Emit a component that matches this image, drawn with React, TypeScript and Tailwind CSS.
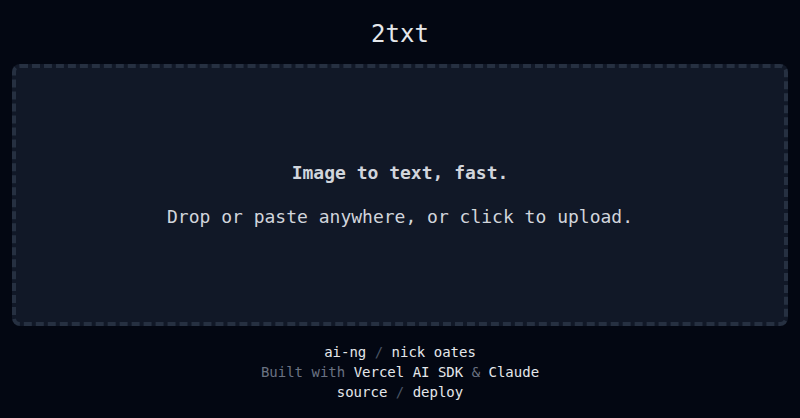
import React from "react";

export default function App() {
  return (
    <div
      className="h-screen flex flex-col bg-[#030712] text-gray-300"
      style={{ fontFamily: '"DejaVu Sans Mono", "Liberation Mono", monospace' }}
    >
      {/* HEADER */}
      <header className="pt-[18px] pb-[14px] text-center">
        <h1 className="text-2xl text-gray-200">2txt</h1>
      </header>

      {/* DROP ZONE */}
      <div className="flex-1 px-3">
        <div className="h-full rounded-lg border-4 border-dashed border-[#263041] bg-[#111827] flex flex-col items-center justify-center gap-4 text-lg">
          <p className="font-bold text-gray-300">Image to text, fast.</p>
          <p className="text-gray-300">Drop or paste anywhere, or click to upload.</p>
        </div>
      </div>

      {/* FOOTER */}
      <footer className="py-4 text-center text-sm leading-5 text-gray-500">
        <p>
          <a className="text-gray-200">ai-ng</a>
          <span className="text-gray-600"> / </span>
          <a className="text-gray-200">nick oates</a>
        </p>
        <p>
          Built with <a className="text-gray-200">Vercel AI SDK</a> &amp;{" "}
          <a className="text-gray-200">Claude</a>
        </p>
        <p>
          <a className="text-gray-200">source</a>
          <span className="text-gray-600"> / </span>
          <a className="text-gray-200">deploy</a>
        </p>
      </footer>
    </div>
  );
}
